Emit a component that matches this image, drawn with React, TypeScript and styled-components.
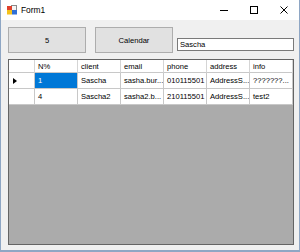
import React from "react";
import styled, { createGlobalStyle } from "styled-components";

const GlobalStyle = createGlobalStyle`
  html, body { margin: 0; padding: 0; background: #ffffff; }
  body { font-family: "Liberation Sans", Arial, sans-serif; }
  * { box-sizing: border-box; }
`;

const Window = styled.div`
  width: 300px;
  height: 252px;
  display: flex;
  flex-direction: column;
  background: #f0f0f0;
  border-left: 1px solid #8ea6c4;
  border-right: 1px solid #8ea6c4;
  border-bottom: 2px solid #8ea6c4;
`;

const TitleBar = styled.div`
  height: 20px;
  flex: none;
  display: flex;
  align-items: center;
  background: #ffffff;
  padding-left: 6px;
`;

const TitleText = styled.span`
  margin-left: 4px;
  font-size: 8.4px;
  color: #000000;
  flex: 1;
`;

const Caption = styled.div`
  width: 30px;
  height: 20px;
  display: flex;
  align-items: center;
  justify-content: center;
`;

const Client = styled.div`
  flex: 1;
  display: flex;
  flex-direction: column;
  padding: 7px 5px 5px 7px;
  min-height: 0;
`;

const Toolbar = styled.div`
  display: flex;
  align-items: flex-start;
`;

const Button = styled.div<{ $gap: number }>`
  width: 78px;
  height: 26px;
  margin-right: ${(p) => p.$gap}px;
  background: #e1e1e1;
  border: 1px solid #adadad;
  display: flex;
  align-items: center;
  justify-content: center;
  font-size: 7.6px;
  color: #000;
`;

const TextBox = styled.div`
  width: 117px;
  height: 13px;
  margin-top: 11px;
  background: #ffffff;
  border: 1px solid #7a7a7a;
  font-size: 7.6px;
  display: flex;
  align-items: center;
  padding-left: 2px;
  color: #000;
`;

const GridView = styled.div`
  margin-top: 6px;
  flex: 1;
  background: #ababab;
  border: 1px solid #646464;
`;

const Table = styled.div`
  display: grid;
  grid-template-columns: 26px repeat(5, 43px) 43px;
  grid-auto-rows: 16px;
  grid-template-rows: 13px;
  background: #ffffff;
`;

const Cell = styled.div<{ $selected?: boolean; $header?: boolean }>`
  border-right: 1px solid ${(p) => (p.$header ? "#d5d5d5" : "#c8c8c8")};
  border-bottom: 1px solid #c8c8c8;
  background: ${(p) => (p.$selected ? "#0078d7" : "#ffffff")};
  color: ${(p) => (p.$selected ? "#ffffff" : "#000000")};
  font-size: 7.6px;
  display: flex;
  align-items: center;
  padding-left: 3px;
  white-space: nowrap;
  overflow: hidden;
`;

const RowHead = styled(Cell)`
  padding-left: 4px;
`;

const Arrow = () => (
  <svg width="4" height="6" viewBox="0 0 4 6">
    <path d="M0 0 L4 3 L0 6 Z" fill="#000" />
  </svg>
);

const AppIcon = () => (
  <svg width="10" height="10" viewBox="0 0 10 10">
    <rect x="4.5" y="0.5" width="5" height="5" fill="#f4f4f4" stroke="#8a8a8a" strokeWidth="1" />
    <rect x="0" y="1" width="5" height="4.5" fill="#e0402a" />
    <rect x="0" y="5" width="5" height="4.5" fill="#f5c21b" />
    <rect x="5" y="5" width="5" height="4.5" fill="#2f6fd6" />
  </svg>
);

const MinGlyph = () => (
  <svg width="8" height="8" viewBox="0 0 8 8">
    <line x1="0" y1="4.5" x2="8" y2="4.5" stroke="#000" strokeWidth="1" />
  </svg>
);

const MaxGlyph = () => (
  <svg width="8" height="8" viewBox="0 0 8 8">
    <rect x="0.5" y="0.5" width="7" height="7" fill="none" stroke="#000" strokeWidth="1" />
  </svg>
);

const CloseGlyph = () => (
  <svg width="8" height="8" viewBox="0 0 8 8">
    <path d="M0.5 0.5 L7.5 7.5 M7.5 0.5 L0.5 7.5" stroke="#000" strokeWidth="1" />
  </svg>
);

const headers = ["N%", "client", "email", "phone", "address", "info"];
const rows = [
  { current: true, cells: ["1", "Sascha", "sasha.bur...", "010115501", "AddressS...", "???????..."] },
  { current: false, cells: ["4", "Sascha2", "sasha2.b...", "210115501", "AddressS...", "test2"] },
];

export default function App() {
  return (
    <>
      <GlobalStyle />
      <Window>
        <TitleBar>
          <AppIcon />
          <TitleText>Form1</TitleText>
          <Caption><MinGlyph /></Caption>
          <Caption><MaxGlyph /></Caption>
          <Caption><CloseGlyph /></Caption>
        </TitleBar>
        <Client>
          <Toolbar>
            <Button $gap={9}>5</Button>
            <Button $gap={4}>Calendar</Button>
            <TextBox>Sascha</TextBox>
          </Toolbar>
          <GridView>
            <Table>
              <Cell $header />
              {headers.map((h) => (
                <Cell $header key={h}>{h}</Cell>
              ))}
              {rows.map((r, i) => (
                <React.Fragment key={i}>
                  <RowHead>{r.current ? <Arrow /> : null}</RowHead>
                  {r.cells.map((c, j) => (
                    <Cell key={j} $selected={r.current && j === 0}>{c}</Cell>
                  ))}
                </React.Fragment>
              ))}
            </Table>
          </GridView>
        </Client>
      </Window>
    </>
  );
}
